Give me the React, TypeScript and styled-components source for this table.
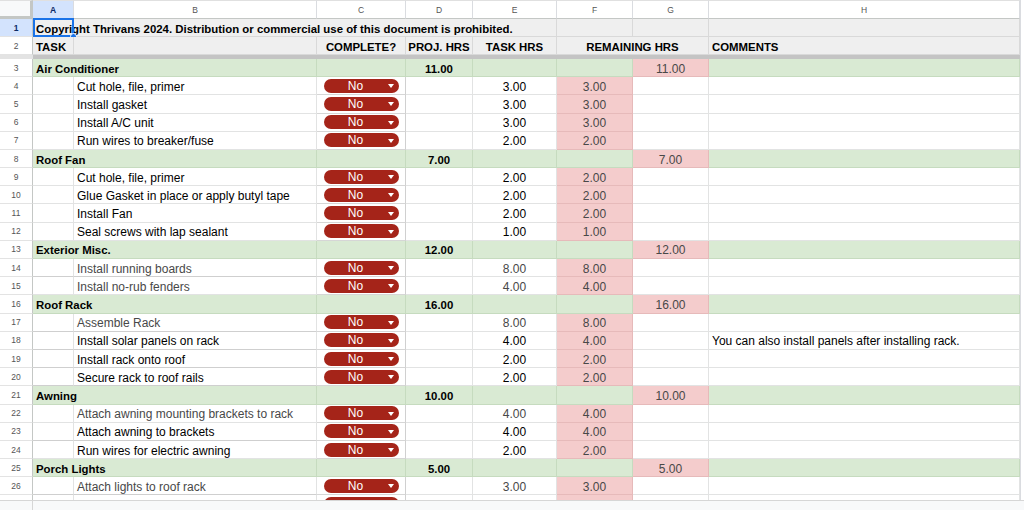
import React from "react";
import styled, { createGlobalStyle } from "styled-components";

type Fill = "white" | "gray" | "green" | "pink";
type Tone = "ink" | "soft";

interface Task {
  name: string;
  hrs: string;
  tone?: Tone;
  comment?: string;
  ruled?: boolean;
}

interface Group {
  title: string;
  proj: string;
  tasks: Task[];
}

const groups: Group[] = [
  {
    title: "Air Conditioner",
    proj: "11.00",
    tasks: [
      { name: "Cut hole, file, primer", hrs: "3.00" },
      { name: "Install gasket", hrs: "3.00" },
      { name: "Install A/C unit", hrs: "3.00" },
      { name: "Run wires to breaker/fuse", hrs: "2.00" },
    ],
  },
  {
    title: "Roof Fan",
    proj: "7.00",
    tasks: [
      { name: "Cut hole, file, primer", hrs: "2.00" },
      { name: "Glue Gasket in place or apply butyl tape", hrs: "2.00" },
      { name: "Install Fan", hrs: "2.00" },
      { name: "Seal screws with lap sealant", hrs: "1.00" },
    ],
  },
  {
    title: "Exterior Misc.",
    proj: "12.00",
    tasks: [
      { name: "Install running boards", hrs: "8.00", tone: "soft", ruled: true },
      { name: "Install no-rub fenders", hrs: "4.00", tone: "soft" },
    ],
  },
  {
    title: "Roof Rack",
    proj: "16.00",
    tasks: [
      { name: "Assemble Rack", hrs: "8.00", tone: "soft", ruled: true },
      {
        name: "Install solar panels on rack",
        hrs: "4.00",
        ruled: true,
        comment: "You can also install panels after installing rack.",
      },
      { name: "Install rack onto roof", hrs: "2.00", ruled: true },
      { name: "Secure rack to roof rails", hrs: "2.00", ruled: true },
    ],
  },
  {
    title: "Awning",
    proj: "10.00",
    tasks: [
      { name: "Attach awning mounting brackets to rack", hrs: "4.00", tone: "soft" },
      { name: "Attach awning to brackets", hrs: "4.00", ruled: true },
      { name: "Run wires for electric awning", hrs: "2.00" },
    ],
  },
  {
    title: "Porch Lights",
    proj: "5.00",
    tasks: [{ name: "Attach lights to roof rack", hrs: "3.00", tone: "soft", ruled: true }],
  },
];

const COLS = "33px 41px 243px 89px 67px 84px 76px 76px 311px";
const LETTERS = ["A", "B", "C", "D", "E", "F", "G", "H"];
const ROW_H = 18.2;

const fills: Record<Fill, { bg: string; line: string }> = {
  white: { bg: "#ffffff", line: "#e2e3e3" },
  gray: { bg: "#efefef", line: "#d9d9d9" },
  green: { bg: "#d9ead3", line: "#c6dbbf" },
  pink: { bg: "#f4cccc", line: "#e6baba" },
};

const GlobalStyle = createGlobalStyle`
  html, body {
    margin: 0;
    padding: 0;
    overflow: hidden;
    background: #ffffff;
  }
  body {
    font-family: "Liberation Sans", Arial, sans-serif;
    color: #000;
  }
`;

const Sheet = styled.div`
  width: 1024px;
  height: 510px;
  display: flex;
  flex-direction: column;
  background: #ffffff;
`;

const Main = styled.div`
  flex: 1;
  display: flex;
  min-height: 0;
`;

const Grid = styled.div`
  width: 1020px;
  display: flex;
  flex-direction: column;
  overflow: hidden;
`;

const Rail = styled.div`
  flex: 1;
  background: #ffffff;
  border-left: 1px solid #dadce0;
`;

const Footer = styled.div`
  height: 10px;
  flex: none;
  display: grid;
  grid-template-columns: 33px 1fr;
  background: #f8f9fa;
  border-top: 1px solid #d6d6d6;
  box-sizing: border-box;
`;

const FooterHead = styled.div`
  border-right: 1px solid #d6d6d6;
`;

const Row = styled.div<{ $h: number }>`
  flex: none;
  position: relative;
  height: ${(p) => p.$h}px;
  display: grid;
  grid-template-columns: ${COLS};
`;

const Corner = styled.div`
  background: #f8f9fa;
  border-right: 3px solid #c4c7c5;
  border-bottom: 3px solid #c4c7c5;
  border-top: 1px solid #e0e0e0;
`;

const ColHead = styled.div<{ $active?: boolean }>`
  display: flex;
  align-items: center;
  justify-content: center;
  font-size: 8.5px;
  font-weight: ${(p) => (p.$active ? 700 : 400)};
  color: ${(p) => (p.$active ? "#0b2a66" : "#555")};
  background: ${(p) => (p.$active ? "#d3e3fd" : "#ffffff")};
  border-top: 1px solid #e0e0e0;
  border-right: 1px solid #dadce0;
  border-bottom: 1px solid #c4c7c5;
`;

const RowHead = styled.div<{ $active?: boolean }>`
  display: flex;
  align-items: center;
  justify-content: center;
  font-size: 8.5px;
  font-weight: ${(p) => (p.$active ? 700 : 400)};
  color: ${(p) => (p.$active ? "#0b2a66" : "#555")};
  background: ${(p) => (p.$active ? "#d3e3fd" : "#ffffff")};
  border-right: 1px solid #c4c7c5;
  border-bottom: 1px solid #e3e3e3;
`;

const Cell = styled.div<{
  $fill?: Fill;
  $align?: "left" | "center";
  $bold?: boolean;
  $tone?: Tone;
  $span?: number;
  $rule?: string;
}>`
  grid-column: span ${(p) => p.$span ?? 1};
  min-width: 0;
  display: flex;
  align-items: center;
  justify-content: ${(p) => (p.$align === "center" ? "center" : "flex-start")};
  padding: 2px 3px 0;
  background: ${(p) => fills[p.$fill ?? "white"].bg};
  border-right: 1px solid ${(p) => fills[p.$fill ?? "white"].line};
  border-bottom: 1px solid ${(p) => p.$rule ?? fills[p.$fill ?? "white"].line};
  font-size: ${(p) => (p.$bold ? "11.4px" : "12px")};
  font-weight: ${(p) => (p.$bold ? 700 : 400)};
  color: ${(p) => (p.$tone === "soft" ? "#484848" : "#000")};
  white-space: nowrap;
`;

const ChipCell = styled(Cell)`
  padding: 0 0 0 7px;
  border-right-color: #d0d0d0;
  border-bottom-color: #d6d6d6;
`;

const Chip = styled.div`
  width: 75px;
  height: 14px;
  flex: none;
  border-radius: 7px;
  background: #a52419;
  display: flex;
  align-items: center;
  color: #ffffff;
  font-size: 12px;
`;

const ChipLabel = styled.span`
  flex: 1;
  text-align: center;
  line-height: 14px;
`;

const ChipCaret = styled.span`
  width: 0;
  height: 0;
  margin: 1px 5px 0 1px;
  border-left: 3.7px solid transparent;
  border-right: 3.7px solid transparent;
  border-top: 4px solid #ffffff;
`;

const FreezeHead = styled.div`
  background: #e3e3e3;
`;

const FreezeBar = styled.div`
  grid-column: span 8;
  background: #c4c4c4;
`;

const Selection = styled.div`
  position: absolute;
  left: 33px;
  top: -1px;
  width: 41px;
  height: calc(100% + 1px);
  box-sizing: border-box;
  border: 2px solid #1a73e8;
  pointer-events: none;
`;

const Handle = styled.span`
  position: absolute;
  right: -5px;
  bottom: -5px;
  width: 7px;
  height: 7px;
  border-radius: 50%;
  background: #1a73e8;
  border: 1px solid #ffffff;
  box-sizing: border-box;
`;

const StatusChip = ({ label = "No" }: { label?: string }) => (
  <Chip>
    <ChipLabel>{label}</ChipLabel>
    <ChipCaret />
  </Chip>
);

const GroupRow = ({ num, group }: { num: number; group: Group }) => (
  <Row $h={ROW_H}>
    <RowHead>{num}</RowHead>
    <Cell $fill="green" $span={2} $bold>
      {group.title}
    </Cell>
    <Cell $fill="green" />
    <Cell $fill="green" $align="center" $bold>
      {group.proj}
    </Cell>
    <Cell $fill="green" />
    <Cell $fill="green" />
    <Cell $fill="pink" $align="center" $tone="soft">
      {group.proj}
    </Cell>
    <Cell $fill="green" />
  </Row>
);

const TaskRow = ({ num, task }: { num: number; task: Task }) => {
  const rule = task.ruled ? "#cfcfcf" : undefined;
  return (
    <Row $h={ROW_H}>
      <RowHead>{num}</RowHead>
      <Cell $rule={rule} />
      <Cell $tone={task.tone} $rule={rule}>
        {task.name}
      </Cell>
      <ChipCell>
        <StatusChip />
      </ChipCell>
      <Cell />
      <Cell $align="center" $tone={task.tone}>
        {task.hrs}
      </Cell>
      <Cell $fill="pink" $align="center" $tone="soft">
        {task.hrs}
      </Cell>
      <Cell />
      <Cell>{task.comment}</Cell>
    </Row>
  );
};

const App = () => {
  let num = 2;
  const body: React.ReactNode[] = [];
  groups.forEach((group) => {
    num += 1;
    body.push(<GroupRow key={`g${num}`} num={num} group={group} />);
    group.tasks.forEach((task) => {
      num += 1;
      body.push(<TaskRow key={`t${num}`} num={num} task={task} />);
    });
  });

  return (
    <>
      <GlobalStyle />
      <Sheet>
        <Main>
          <Grid>
            <Row $h={19}>
              <Corner />
              {LETTERS.map((l) => (
                <ColHead key={l} $active={l === "A"}>
                  {l}
                </ColHead>
              ))}
            </Row>
            <Row $h={18.3}>
              <RowHead $active>1</RowHead>
              <Cell $fill="gray" $span={5} $bold>
                Copyright Thrivans 2024. Distribution or commercial use of this document is prohibited.
              </Cell>
              <Cell $fill="gray" />
              <Cell $fill="gray" />
              <Cell $fill="gray" />
              <Selection>
                <Handle />
              </Selection>
            </Row>
            <Row $h={17.7}>
              <RowHead>2</RowHead>
              <Cell $fill="gray" $bold>
                TASK
              </Cell>
              <Cell $fill="gray" />
              <Cell $fill="gray" $align="center" $bold>
                COMPLETE?
              </Cell>
              <Cell $fill="gray" $align="center" $bold>
                PROJ. HRS
              </Cell>
              <Cell $fill="gray" $align="center" $bold>
                TASK HRS
              </Cell>
              <Cell $fill="gray" $span={2} $align="center" $bold>
                REMAINING HRS
              </Cell>
              <Cell $fill="gray" $bold>
                COMMENTS
              </Cell>
            </Row>
            <Row $h={4}>
              <FreezeHead />
              <FreezeBar />
            </Row>
            {body}
            {/* row 27 is only peeking in at the bottom edge */}
            <Row $h={ROW_H}>
              <RowHead />
              <Cell />
              <Cell />
              <ChipCell>
                <StatusChip label="" />
              </ChipCell>
              <Cell />
              <Cell />
              <Cell $fill="pink" />
              <Cell />
              <Cell />
            </Row>
          </Grid>
          <Rail />
        </Main>
        <Footer>
          <FooterHead />
          <div />
        </Footer>
      </Sheet>
    </>
  );
};

export default App;
